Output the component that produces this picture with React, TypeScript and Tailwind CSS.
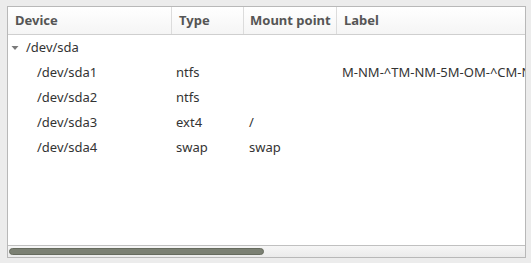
import React from "react";

const rows = [
  { dev: "/dev/sda1", type: "ntfs", mount: "", label: "M-NM-^TM-NM-5M-OM-^CM-NM-^TM-NM-5" },
  { dev: "/dev/sda2", type: "ntfs", mount: "", label: "" },
  { dev: "/dev/sda3", type: "ext4", mount: "/", label: "" },
  { dev: "/dev/sda4", type: "swap", mount: "swap", label: "" },
];

export default function App() {
  return (
    <div
      className="w-[531px] h-[263px] bg-[#ececec] pt-[6px] pl-[7px]"
      style={{ fontFamily: '"Noto Sans", "Open Sans", sans-serif' }}
    >
      <div className="w-[519px] h-[252px] border border-[#b8b8b8] bg-white flex flex-col overflow-hidden">
        {/* header */}
        <div className="h-[28px] flex border-b border-[#cfcfcf] bg-gradient-to-b from-white to-[#f5f5f5] text-[13px] font-bold text-[#555555] shrink-0">
          <div className="w-[164px] border-r border-[#dcdcdc] pl-[7px] flex items-center">Device</div>
          <div className="w-[72px] border-r border-[#dcdcdc] pl-[7px] flex items-center">Type</div>
          <div className="w-[93px] border-r border-[#dcdcdc] pl-[6px] flex items-center">Mount point</div>
          <div className="flex-1 pl-[7px] flex items-center">Label</div>
        </div>
        {/* body */}
        <div className="flex-1 text-[13px] text-[#333333]">
          <div className="h-[25px] flex items-center whitespace-nowrap">
            <div className="w-[164px] flex items-center pl-[3px]">
              <svg width="8" height="6" viewBox="0 0 8 6" className="mr-[7px]">
                <path d="M0.5 1 L7.5 1 L4 5 Z" fill="#7a7a7a" />
              </svg>
              <span>/dev/sda</span>
            </div>
          </div>
          {rows.map((r) => (
            <div key={r.dev} className="h-[25px] flex items-center whitespace-nowrap">
              <div className="w-[164px] pl-[29px]">{r.dev}</div>
              <div className="w-[72px] pl-[4px]">{r.type}</div>
              <div className="w-[93px] pl-[5px]">{r.mount}</div>
              <div className="flex-1 pl-[5px] overflow-hidden">{r.label}</div>
            </div>
          ))}
        </div>
        {/* scrollbar */}
        <div className="h-[12px] border-t border-[#c0c0c0] bg-gradient-to-b from-[#f6f6f6] to-[#ebebeb] flex items-center pl-[1px] shrink-0">
          <div className="w-[255px] h-[7px] rounded-full bg-[#7b8073] border border-[#666b5e]" />
        </div>
      </div>
    </div>
  );
}
